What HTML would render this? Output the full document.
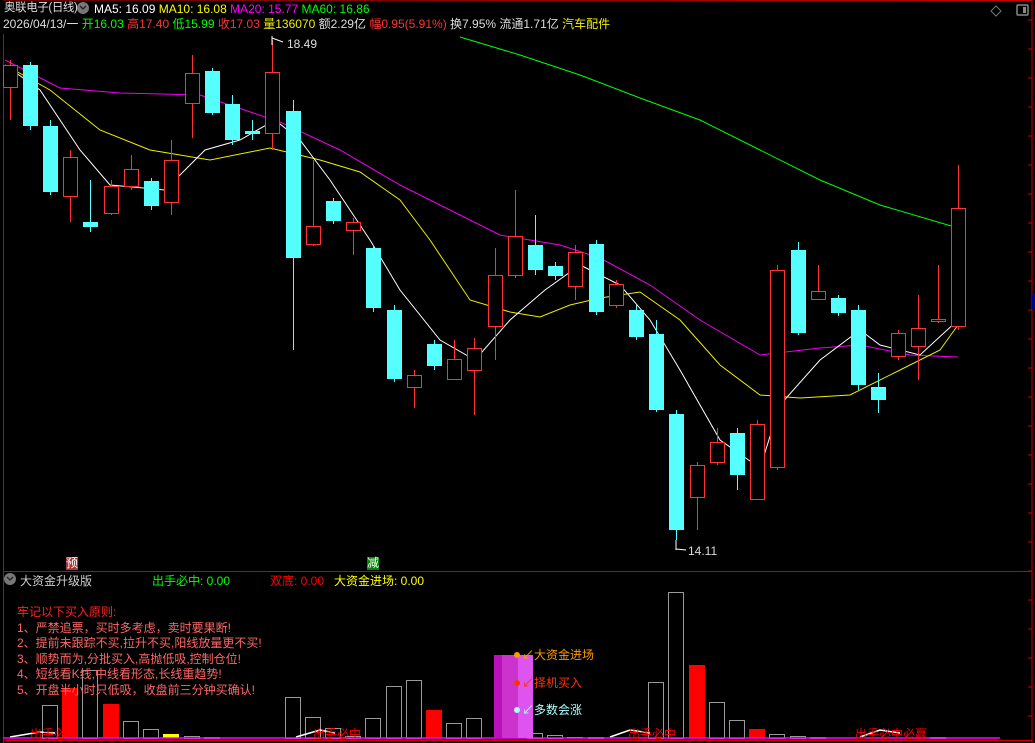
<!DOCTYPE html>
<html><head><meta charset="utf-8"><style>
body{margin:0;background:#000;width:1035px;height:743px;overflow:hidden;font-family:"Liberation Sans","Noto Sans CJK SC",sans-serif;}
svg{position:absolute;left:0;top:0}
.t{position:absolute;font-size:12px;white-space:nowrap;line-height:14px}
</style></head><body>
<svg id="s" width="1035" height="743" xmlns="http://www.w3.org/2000/svg">
<line x1="1032" y1="0" x2="1032" y2="743" stroke="#c00" stroke-width="1"/>
<line x1="3" y1="0" x2="1032" y2="0.5" stroke="#c00"/>
<line x1="3.5" y1="34" x2="3.5" y2="743" stroke="#c00"/>
<line x1="3" y1="571.5" x2="1032" y2="571.5" stroke="#c00"/>
<line x1="3" y1="740.5" x2="1032" y2="740.5" stroke="#c00"/>
<rect x="1032" y="293" width="3" height="16" fill="#00008b"/>
<polyline fill="none" stroke="#0f0" points="460,37 520,55 580,75 640,98 700,120 760,150 820,180 880,205 958,228"/>
<polyline fill="none" stroke="#e0e" points="5,60 60,88 120,93 200,95 280,122 340,150 400,185 460,215 500,235 560,245 600,258 650,285 700,320 760,355 820,348 860,345 910,355 958,357"/>
<polyline fill="none" stroke="#ee0" points="5,65 50,90 100,130 150,150 210,160 270,148 320,160 360,172 400,200 430,240 470,300 510,312 540,317 570,305 600,298 640,292 680,320 720,365 760,395 800,398 850,395 900,370 940,350 958,325"/>
<polyline fill="none" stroke="#fff" points="5,65 40,90 80,150 110,185 165,190 205,150 240,140 275,120 300,140 330,180 370,240 400,290 440,340 475,360 510,320 545,290 580,265 620,285 650,320 680,370 720,440 760,468 780,405 820,360 860,330 880,345 920,355 958,320"/>
<g id="c"></g>
<g id="v"></g>
<polyline fill="none" stroke="#fff" stroke-width="1.5" points="10,737 40,732 55,733"/>
<polyline fill="none" stroke="#fff" stroke-width="1.5" points="296,737 320,730 335,733"/>
<polyline fill="none" stroke="#fff" stroke-width="1.5" points="610,737 630,730 650,733"/>
<polyline fill="none" stroke="#fff" stroke-width="1.5" points="860,737 880,730 900,733"/>
<line x1="3" y1="738" x2="1000" y2="738" stroke="#f0f" stroke-width="1.5"/>
<rect x="494" y="655" width="39" height="83" fill="#c3c"/>
<rect x="494" y="655" width="8" height="83" fill="#b1b"/>
<rect x="518" y="655" width="15" height="83" fill="#d5e"/>
<circle cx="517" cy="655" r="3" fill="#f90"/><circle cx="517" cy="683" r="3" fill="#f30"/><circle cx="517" cy="710" r="3" fill="#aff"/>
<line x1="272" y1="36" x2="272" y2="45" stroke="#fff"/><line x1="272" y1="38" x2="283" y2="42" stroke="#fff"/>
<line x1="676" y1="540" x2="676" y2="550" stroke="#fff"/><line x1="676" y1="549" x2="686" y2="550" stroke="#fff"/>
<rect x="66" y="557" width="12" height="13" fill="#a33"/><rect x="367" y="557" width="12" height="13" fill="#080"/>
<circle cx="10" cy="579" r="6" fill="#777"/><circle cx="83" cy="8" r="6" fill="#777"/>
<path d="M80 6l3 3 3-3" fill="none" stroke="#222" stroke-width="1.3"/>
<path d="M7 577l3 3 3-3" fill="none" stroke="#222" stroke-width="1.3"/>
<path d="M996 6l5 5-5 5-5-5z" fill="none" stroke="#777"/>
<rect x="1017" y="5" width="11" height="10" rx="1" fill="none" stroke="#888" stroke-width="1.5"/><rect x="1023" y="7" width="3" height="6" fill="#888"/>
</svg>
<div class="t" style="left:4px;top:1px;color:#ddd;font-size:11.5px;letter-spacing:-0.4px">奥联电子(日线)</div>
<div class="t" style="left:94px;top:2px;color:#fff">MA5: 16.09 <span style="color:#ff0">MA10: 16.08</span> <span style="color:#f0f">MA20: 15.77</span> <span style="color:#0f0">MA60: 16.86</span></div>
<div class="t" style="left:3px;top:17px;color:#ddd">2026/04/13/一 <span style="color:#0f0">开16.03</span> <span style="color:#f33">高17.40</span> <span style="color:#0f0">低15.99</span> <span style="color:#f33">收17.03</span> <span style="color:#ee0">量136070</span> 额2.29亿 <span style="color:#f33">幅0.95(5.91%)</span> 换7.95% 流通1.71亿 <span style="color:#ee0">汽车配件</span></div>
<div class="t" style="left:287px;top:37px;color:#ddd">18.49</div>
<div class="t" style="left:688px;top:544px;color:#ddd">14.11</div>
<div class="t" style="left:66px;top:556px;color:#fff">预</div>
<div class="t" style="left:367px;top:556px;color:#fff">减</div>
<div class="t" style="left:20px;top:574px;color:#ccc">大资金升级版</div>
<div class="t" style="left:152px;top:574px;color:#0f0">出手必中: 0.00</div>
<div class="t" style="left:270px;top:574px;color:#f00">双底: 0.00</div>
<div class="t" style="left:334px;top:574px;color:#ff0">大资金进场: 0.00</div>
<div class="t" style="left:17px;top:605px;color:#f22;line-height:15.5px">牢记以下买入原则:<br><span style="color:#f66">1、严禁追票，买时多考虑，卖时要果断!<br>2、提前未跟踪不买,拉升不买,阳线放量更不买!<br>3、顺势而为,分批买入,高抛低吸,控制仓位!<br>4、短线看K线,中线看形态,长线重趋势!<br>5、开盘半小时只低吸，收盘前三分钟买确认!</span></div>
<div class="t" style="left:522px;top:648px;color:#f90">↙大资金进场</div>
<div class="t" style="left:522px;top:676px;color:#f30">↙择机买入</div>
<div class="t" style="left:522px;top:703px;color:#aff">↙多数会涨</div>
<div class="t" style="left:30px;top:727px;color:#f00">出手必中</div>
<div class="t" style="left:313px;top:727px;color:#f00">出手必中</div>
<div class="t" style="left:628px;top:727px;color:#f00">出手必中</div>
<div class="t" style="left:855px;top:727px;color:#f00">出手必中必赢</div>
<script>
var C=[[10,'r',65,87,60,120],[30,'c',65,126,62,130],[50,'c',126,192,120,195],[70,'r',157,196,150,222],[90,'c',222,227,180,232],[111,'r',186,213,180,215],[131,'r',169,186,155,190],[151,'c',181,206,178,210],[171,'r',160,202,140,215],[192,'r',73,103,55,138],[212,'c',71,113,68,115],[232,'c',104,140,95,145],[252,'c',131,134,120,140],[272,'r',72,133,40,150],[293,'c',111,258,100,350],[313,'r',226,244,160,246],[333,'c',201,221,198,224],[353,'r',222,230,218,255],[373,'c',248,308,245,312],[394,'c',310,379,305,382],[414,'r',375,387,370,408],[434,'c',344,366,340,370],[454,'r',359,379,340,380],[474,'r',348,370,338,415],[495,'r',275,326,248,360],[515,'r',236,275,190,278],[535,'c',245,270,215,275],[555,'c',266,276,262,280],[575,'r',252,286,245,300],[596,'c',244,312,240,315],[616,'r',284,305,280,308],[636,'c',310,337,305,340],[656,'c',334,410,320,412],[676,'c',414,530,410,540],[697,'r',465,497,462,530],[717,'r',442,462,428,465],[737,'c',433,475,428,490],[757,'r',424,499,420,500],[777,'r',270,467,265,470],[798,'c',250,333,242,335],[818,'r',291,299,265,300],[838,'c',298,313,295,316],[858,'c',310,385,305,390],[878,'c',387,400,373,413],[898,'r',333,356,330,360],[918,'r',328,346,295,380],[938,'r',319,321,265,323],[958,'r',208,326,165,330]];
var h='';C.forEach(function(k){var x=k[0],col=k[1]=='r'?'#f33':'#5ff';
h+='<line x1="'+x+'.5" y1="'+k[4]+'" x2="'+x+'.5" y2="'+k[5]+'" stroke="'+col+'"/>';
if(k[1]=='r')h+='<rect x="'+(x-6.5)+'" y="'+k[2]+'.5" width="14" height="'+Math.max(1,k[3]-k[2])+'" fill="#000" stroke="'+col+'"/>';
else h+='<rect x="'+(x-7)+'" y="'+k[2]+'" width="15" height="'+Math.max(2,k[3]-k[2])+'" fill="'+col+'"/>';});
document.getElementById('c').innerHTML=h;
var V=[[50,'g',705],[70,'r',688],[90,'g',670],[111,'r',704],[131,'g',721],[151,'g',729],[171,'y',734],[192,'g',736],[212,'g',737],[293,'g',697],[313,'g',717],[333,'g',728],[353,'g',736],[373,'g',718],[394,'g',686],[414,'g',680],[434,'r',710],[454,'g',723],[474,'g',718],[535,'g',733],[555,'g',735],[575,'y',737],[596,'g',737],[656,'g',682],[676,'g',592],[697,'r',665],[717,'g',702],[737,'g',720],[757,'r',729],[777,'g',734],[798,'g',736],[818,'g',737],[938,'g',737]];
h='';V.forEach(function(k){var x=k[0]-8;
if(k[1]=='g')h+='<rect x="'+x+'.5" y="'+k[2]+'.5" width="15" height="'+(738-k[2])+'" fill="none" stroke="#999"/>';
else h+='<rect x="'+x+'" y="'+k[2]+'" width="16" height="'+(738-k[2])+'" fill="'+(k[1]=='r'?'#f00':'#ff0')+'"/>';});
document.getElementById('v').innerHTML=h;
var s=document.getElementById('s'),t='';for(var y=20;y<740;y+=29)t+='<line x1="1028" y1="'+y+'" x2="1032" y2="'+y+'" stroke="#c00"/>';s.insertAdjacentHTML('beforeend',t);
</script>
</body></html>
